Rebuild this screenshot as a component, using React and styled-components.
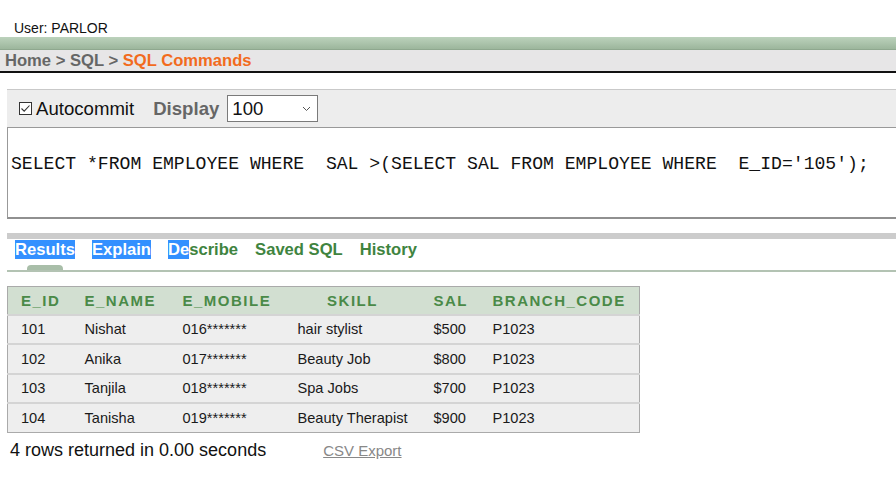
import React from "react";
import styled, { createGlobalStyle } from "styled-components";

const GlobalStyle = createGlobalStyle`
  html, body {
    margin: 0;
    padding: 0;
    background: #ffffff;
    font-family: "Liberation Sans", Arial, sans-serif;
    overflow: hidden;
  }
`;

const Page = styled.div`
  width: 896px;
  height: 490px;
  overflow: hidden;
`;

const UserLine = styled.div`
  padding: 20px 0 0 14px;
  height: 17px;
  font-size: 14px;
  color: #111;
  line-height: 17px;
`;

const GreenBar = styled.div`
  height: 12px;
  background: linear-gradient(#bcd2bc, #9cb69c);
  border-bottom: 1px solid #8fa88f;
`;

const Breadcrumb = styled.div`
  height: 21px;
  padding-left: 5px;
  background: #e7e6e7;
  border-bottom: 2px solid #111;
  font-size: 16.6px;
  font-weight: bold;
  line-height: 22px;
  color: #666;

  span {
    color: #f26b1d;
  }
`;

const Toolbar = styled.div`
  margin: 16px 0 0 7px;
  height: 37px;
  border-top: 1px solid #c9c9c9;
  background: #ededed;
  display: flex;
  align-items: center;
  padding-left: 12px;
  font-size: 18.6px;
  color: #111;
`;

const Check = styled.label`
  display: flex;
  align-items: center;
  gap: 4px;
`;

const DisplayLabel = styled.span`
  margin-left: 19px;
  font-weight: bold;
  color: #666;
`;

const Select = styled.div`
  margin-left: 8px;
  width: 79px;
  height: 25px;
  border: 1px solid #7a7a7a;
  background: #fff;
  display: flex;
  align-items: center;
  justify-content: space-between;
  padding: 0 6px 0 4px;
  font-size: 18.6px;
`;

const Editor = styled.div`
  margin-left: 7px;
  border: 1px solid #999;
  border-right: none;
  border-bottom: 2px solid #909090;
  background: #fff;
  box-sizing: content-box;
  padding: 25px 0 0 3px;
  height: 64px;
  font-family: "Liberation Mono", "Courier New", monospace;
  font-size: 18.1px;
  line-height: 22px;
  white-space: pre;
  color: #111;
`;

const TabBand = styled.div`
  margin: 14px 0 0 7px;
  height: 6px;
  background: #cccccc;
`;

const Tabs = styled.div`
  margin-left: 7px;
  height: 33px;
  border-bottom: 2px solid #b3c3b3;
  display: flex;
  align-items: flex-start;
  padding: 1px 0 0 8px;
  box-sizing: border-box;
  position: relative;
  gap: 17px;
`;

const Tab = styled.span`
  font-size: 16.6px;
  font-weight: bold;
  color: #3f8440;
  line-height: 20px;

  mark {
    background: #3390ff;
    color: #fff;
  }
`;

const Indicator = styled.div`
  position: absolute;
  left: 20px;
  bottom: 0;
  width: 36px;
  height: 5px;
  border-radius: 4px 4px 0 0;
  background: #a9bea9;
`;

const Table = styled.table`
  margin: 14px 0 0 7px;
  border-collapse: collapse;
  table-layout: fixed;
  border: 1px solid #aaa;
  width: 632px;
  font-size: 14.6px;
`;

const Th = styled.th`
  box-sizing: border-box;
  background: #d2dfd1;
  color: #4a8a48;
  font-size: 15px;
  font-weight: bold;
  letter-spacing: 1.5px;
  height: 28px;
  padding: 0 0 0 ${(p) => (p.$center ? 0 : 13)}px;
  text-align: ${(p) => (p.$center ? "center" : "left")};
`;

const Td = styled.td`
  box-sizing: border-box;
  background: #eeeeee;
  color: #1a1a1a;
  height: 29.6px;
  padding: 0 0 0 13px;
  border-top: 2px solid #d4d4d4;
`;

const Footer = styled.div`
  margin: 7px 0 0 10px;
  display: flex;
  align-items: baseline;
  font-size: 18px;
  color: #111;

  a {
    margin-left: 57px;
    font-size: 15px;
    color: #888;
    text-decoration: underline;
  }
`;

const columns = [
  { name: "E_ID", width: 64 },
  { name: "E_NAME", width: 98 },
  { name: "E_MOBILE", width: 115 },
  { name: "SKILL", width: 136, center: true },
  { name: "SAL", width: 59 },
  { name: "BRANCH_CODE", width: 160 },
];

const rows = [
  ["101", "Nishat", "016*******", "hair stylist", "$500", "P1023"],
  ["102", "Anika", "017*******", "Beauty Job", "$800", "P1023"],
  ["103", "Tanjila", "018*******", "Spa Jobs", "$700", "P1023"],
  ["104", "Tanisha", "019*******", "Beauty Therapist", "$900", "P1023"],
];

export default function App() {
  return (
    <Page>
      <GlobalStyle />
      <UserLine>User: PARLOR</UserLine>
      <GreenBar />
      <Breadcrumb>
        Home &gt; SQL &gt; <span>SQL Commands</span>
      </Breadcrumb>

      <Toolbar>
        <Check>
          <svg width="13" height="13" viewBox="0 0 13 13">
            <rect x="0.5" y="0.5" width="12" height="12" fill="#fff" stroke="#333" />
            <path d="M2.5 6.5 L5.2 9.2 L10.5 3.5" fill="none" stroke="#333" strokeWidth="1.1" />
          </svg>
          Autocommit
        </Check>
        <DisplayLabel>Display</DisplayLabel>
        <Select>
          100
          <svg width="9" height="6" viewBox="0 0 9 6">
            <path d="M1 1 L4.5 4.5 L8 1" fill="none" stroke="#555" strokeWidth="1" />
          </svg>
        </Select>
      </Toolbar>

      <Editor>SELECT *FROM EMPLOYEE WHERE  SAL &gt;(SELECT SAL FROM EMPLOYEE WHERE  E_ID='105');</Editor>

      <TabBand />
      <Tabs>
        <Tab><mark>Results</mark></Tab>
        <Tab><mark>Explain</mark></Tab>
        <Tab><mark>De</mark>scribe</Tab>
        <Tab>Saved SQL</Tab>
        <Tab>History</Tab>
        <Indicator />
      </Tabs>

      <Table>
        <colgroup>
          {columns.map((c) => (
            <col key={c.name} style={{ width: c.width }} />
          ))}
        </colgroup>
        <thead>
          <tr>
            {columns.map((c) => (
              <Th key={c.name} $center={c.center}>{c.name}</Th>
            ))}
          </tr>
        </thead>
        <tbody>
          {rows.map((r) => (
            <tr key={r[0]}>
              {r.map((c, i) => (
                <Td key={i}>{c}</Td>
              ))}
            </tr>
          ))}
        </tbody>
      </Table>

      <Footer>
        4 rows returned in 0.00 seconds
        <a>CSV Export</a>
      </Footer>
    </Page>
  );
}
